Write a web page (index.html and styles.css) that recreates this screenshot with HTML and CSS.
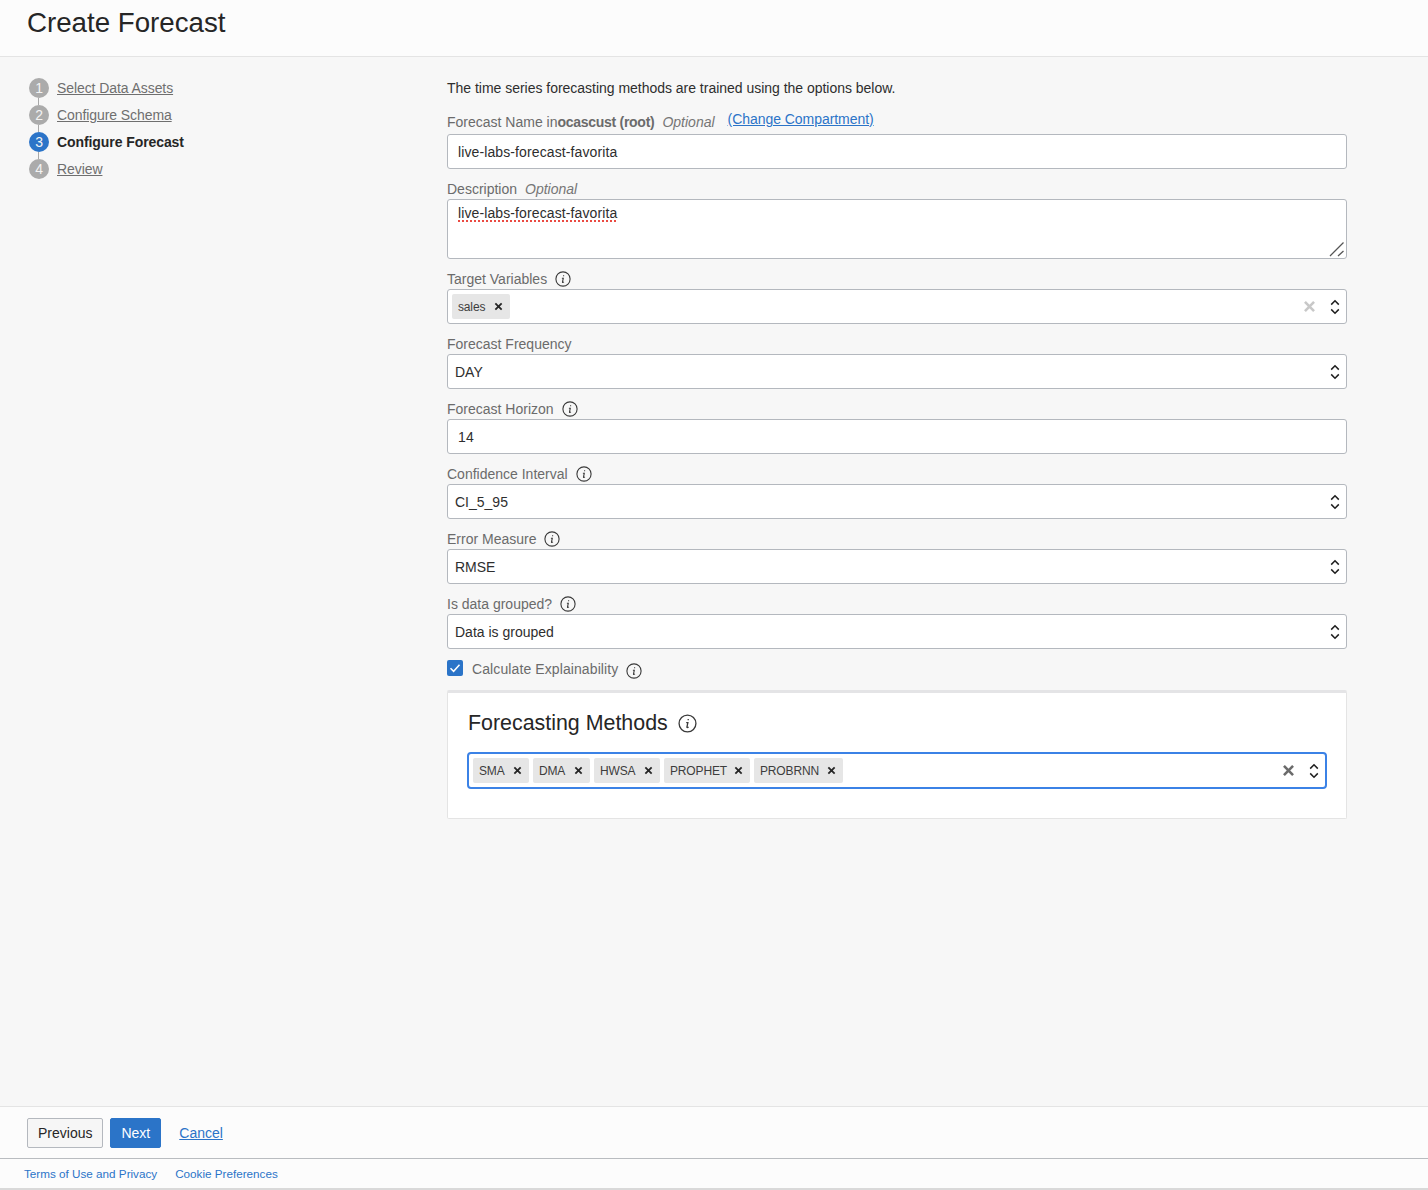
FILE: index.html
```html
<!DOCTYPE html>
<html lang="en">
<head>
<meta charset="utf-8">
<title>Create Forecast</title>
<link rel="stylesheet" href="styles.css">
</head>
<body>
<svg class="defs" width="0" height="0" aria-hidden="true">
  <symbol id="info" viewBox="0 0 16 16">
    <circle cx="8" cy="8" r="7.1" fill="none" stroke="currentColor" stroke-width="1.1"/>
    <path d="M8.6 4.2v1.1M6.9 7.2h1.4L7.5 11c-.1.5.5.6 1.4-.1" fill="none" stroke="currentColor" stroke-width="1.1"/>
  </symbol>
  <symbol id="updown" viewBox="0 0 10 16">
    <path d="M1.2 5.6 5 1.8l3.8 3.8M1.2 10.4 5 14.2l3.8-3.8" fill="none" stroke="currentColor" stroke-width="1.5"/>
  </symbol>
  <symbol id="close" viewBox="0 0 10 10">
    <path d="M1.5 1.5l7 7M8.5 1.5l-7 7" fill="none" stroke="currentColor" stroke-width="2"/>
  </symbol>
</svg>
<div class="page">
  <header class="header"><h1 class="title">Create Forecast</h1></header>
  <main class="main">
    <nav class="steps">
      <div class="step"><span class="num">1</span><a class="step-link" href="#">Select Data Assets</a></div>
      <div class="step"><span class="num">2</span><a class="step-link" href="#">Configure Schema</a></div>
      <div class="step current"><span class="num">3</span><span class="step-now">Configure Forecast</span></div>
      <div class="step"><span class="num">4</span><a class="step-link" href="#">Review</a></div>
    </nav>
    <form class="form">
      <p class="intro">The time series forecasting methods are trained using the options below.</p>
      <div class="field">
        <div class="label name-label"><span>Forecast Name in<b class="strong">ocascust (root)</b></span><i class="opt">Optional</i><a class="compartment" href="#">(Change Compartment)</a></div>
        <div class="control text">live-labs-forecast-favorita</div>
      </div>
      <div class="field">
        <div class="label"><span>Description</span><i class="opt">Optional</i></div>
        <div class="control area"><span class="squiggle">live-labs-forecast-favorita</span>
          <svg class="grip" width="16" height="16" viewBox="0 0 16 16"><path d="M1 15 14.500 1.500M9 15l5.500-5" fill="none" stroke="#555" stroke-width="1.300"/></svg>
        </div>
      </div>
      <div class="field">
        <div class="label"><span>Target Variables</span><svg class="info"><use href="#info"/></svg></div>
        <div class="control multi">
          <span class="chip small">sales<svg class="chip-x"><use href="#close"/></svg></span>
          <svg class="clear faint"><use href="#close"/></svg>
          <svg class="updown"><use href="#updown"/></svg>
        </div>
      </div>
      <div class="field">
        <div class="label"><span>Forecast Frequency</span></div>
        <div class="control select">DAY<svg class="updown"><use href="#updown"/></svg></div>
      </div>
      <div class="field">
        <div class="label"><span>Forecast Horizon</span><svg class="info"><use href="#info"/></svg></div>
        <div class="control text">14</div>
      </div>
      <div class="field">
        <div class="label"><span>Confidence Interval</span><svg class="info"><use href="#info"/></svg></div>
        <div class="control select">CI_5_95<svg class="updown"><use href="#updown"/></svg></div>
      </div>
      <div class="field">
        <div class="label"><span>Error Measure</span><svg class="info"><use href="#info"/></svg></div>
        <div class="control select">RMSE<svg class="updown"><use href="#updown"/></svg></div>
      </div>
      <div class="field">
        <div class="label"><span>Is data grouped?</span><svg class="info"><use href="#info"/></svg></div>
        <div class="control select">Data is grouped<svg class="updown"><use href="#updown"/></svg></div>
      </div>
      <div class="check-row">
        <span class="checkbox"><svg width="16" height="16" viewBox="0 0 16 16"><path d="M3.500 8.300 6.600 11.300 12.500 4.800" fill="none" stroke="#fff" stroke-width="1.500"/></svg></span>
        <span class="check-label">Calculate Explainability</span>
        <svg class="info check-info"><use href="#info"/></svg>
      </div>
      <section class="panel">
        <h2 class="panel-title">Forecasting Methods<svg class="info panel-info"><use href="#info"/></svg></h2>
        <div class="control multi focused">
          <span class="chip">SMA<svg class="chip-x"><use href="#close"/></svg></span>
          <span class="chip">DMA<svg class="chip-x"><use href="#close"/></svg></span>
          <span class="chip">HWSA<svg class="chip-x"><use href="#close"/></svg></span>
          <span class="chip">PROPHET<svg class="chip-x"><use href="#close"/></svg></span>
          <span class="chip">PROBRNN<svg class="chip-x"><use href="#close"/></svg></span>
          <svg class="clear"><use href="#close"/></svg>
          <svg class="updown"><use href="#updown"/></svg>
        </div>
      </section>
    </form>
  </main>
  <div class="actions">
    <button class="btn" type="button">Previous</button>
    <button class="btn primary" type="button">Next</button>
    <a class="cancel" href="#">Cancel</a>
  </div>
  <footer class="footer">
    <a class="foot-link" href="#">Terms of Use and Privacy</a>
    <a class="foot-link" href="#">Cookie Preferences</a>
  </footer>
</div>
</body>
</html>
```
FILE: styles.css
```css
* { box-sizing: border-box; }
html, body { margin: 0; height: 100%; }
body {
  font-family: "Liberation Sans", Arial, sans-serif;
  font-size: 14px;
  color: #262626;
  background: #f7f7f7;
  overflow: hidden;
}
.defs { position: absolute; }
.page { display: flex; flex-direction: column; height: 1190px; }

.header {
  height: 57px;
  flex: none;
  background: #fcfcfc;
  border-bottom: 1px solid #e4e4e4;
  padding-left: 27px;
}
.title {
  margin: 0;
  font-size: 27.7px;
  font-weight: 400;
  line-height: 45px;
}

.main { flex: 1; display: flex; padding: 21px 0 0 29px; }

.steps { width: 418px; flex: none; letter-spacing: -0.08px; }
.step {
  position: relative;
  display: flex;
  align-items: center;
  gap: 8px;
  height: 20px;
  margin-bottom: 7px;
}
.step:not(:last-child)::after {
  content: "";
  position: absolute;
  left: 9px;
  top: 20px;
  width: 1px;
  height: 7px;
  background: #a8a8a8;
}
.num {
  width: 20px;
  height: 20px;
  border-radius: 50%;
  background: #ababab;
  color: #f3f3f3;
  font-size: 14px;
  line-height: 20px;
  text-align: center;
}
.current .num { background: #2b74c8; }
.step-link { color: #6f6f6f; }
.step-now { color: #262626; font-weight: 700; }

.form { width: 900px; flex: none; }
.intro { margin: 0; height: 20px; line-height: 20px; color: #2e2e2e; letter-spacing: -0.02px; }

.field { margin-top: 10px; }
.label {
  display: flex;
  align-items: center;
  height: 20px;
  color: #6b6b6b;
  line-height: 20px;
}
.name-label { height: 26px; align-items: flex-end; padding-bottom: 2px; }
.strong { font-weight: 700; letter-spacing: -0.28px; }
.opt { margin-left: 8px; color: #767676; }
.compartment { margin: 0 0 3px 13px; color: #2b74c8; letter-spacing: -0.05px; }
.info { width: 16px; height: 16px; margin-left: 8px; color: #3a3a3a; flex: none; }

.control {
  position: relative;
  display: flex;
  align-items: center;
  height: 35px;
  background: #fff;
  border: 1px solid #b4b8be;
  border-radius: 3px;
  color: #2e2e2e;
}
.text { padding-left: 10px; letter-spacing: 0.11px; }
.select { padding-left: 7px; }
.area { height: 60px; align-items: flex-start; padding: 3px 10px; line-height: 20px; letter-spacing: 0.11px; }
.squiggle {
  text-decoration: underline dotted #ea4a42 2px;
  text-underline-offset: 2px;
  text-decoration-skip-ink: none;
}
.grip { position: absolute; right: 1px; bottom: 1px; }
.multi { gap: 4px; padding-left: 4px; }
.chip {
  display: inline-flex;
  align-items: center;
  justify-content: space-between;
  height: 25px;
  padding: 0 7px 0 6px;
  background: #e6e6e6;
  border-radius: 2px;
  font-size: 12px;
  color: #3d3d3d;
  letter-spacing: -0.15px;
}
.chip.small { width: 58px; }
.chip-x { width: 9px; height: 9px; color: #262626; flex: none; }
.clear { width: 13px; height: 13px; margin-left: auto; margin-right: 30px; color: #6b6b6b; }
.clear.faint { color: #c8c8c8; }
.updown { position: absolute; right: 6px; top: 50%; width: 10px; height: 16px; margin-top: -8px; color: #1f1f1f; }

.check-row { display: flex; align-items: center; height: 20px; margin-top: 10px; }
.checkbox {
  width: 16px;
  height: 16px;
  flex: none;
  background: #2b74c8;
  border-radius: 2px;
  display: flex;
  margin-top: -2px;
}
.check-label { margin-left: 9px; color: #6b6b6b; letter-spacing: 0.1px; }
.check-info { margin-top: 4px; }

.panel {
  height: 129px;
  margin-top: 11px;
  padding: 17px 20px 0;
  background: #fff;
  border: 1px solid #e4e4e4;
  border-top: 3px solid #e4e4e6;
  border-radius: 2px;
}
.panel-title {
  display: flex;
  align-items: center;
  height: 26px;
  margin: 0 0 16px;
  font-size: 21.4px;
  font-weight: 400;
  color: #262626;
}
.panel-info { width: 19px; height: 19px; margin-left: 10px; }
.focused { height: 37px; margin: 0 -1px; border: 2px solid #3b82e6; border-radius: 4px; }
.focused .chip:nth-of-type(1) { width: 56px; }
.focused .chip:nth-of-type(2) { width: 57px; }
.focused .chip:nth-of-type(3) { width: 66px; }
.focused .chip:nth-of-type(4) { width: 86px; }
.focused .chip:nth-of-type(5) { width: 89px; }
.focused .clear { margin-right: 30px; }

.actions {
  flex: none;
  display: flex;
  align-items: center;
  height: 53px;
  padding: 1px 27px 0;
  background: #fcfcfc;
  border-top: 1px solid #e4e4e4;
  border-bottom: 1px solid #b9bcc0;
}
.btn {
  height: 30px;
  padding: 0 10px;
  border: 1px solid #b4b8be;
  border-radius: 2px;
  background: #f6f6f6;
  color: #262626;
  font: 14px "Liberation Sans", Arial, sans-serif;
}
.primary {
  margin-left: 7px;
  background: #2b74c8;
  border-color: #2b74c8;
  color: #fff;
}
.cancel { margin-left: 18px; color: #2b74c8; }

.footer {
  flex: none;
  display: flex;
  align-items: center;
  gap: 18px;
  height: 31px;
  padding: 0 0 0 24px;
  background: #fcfcfc;
  border-bottom: 2px solid #d9d9d9;
  font-size: 11.7px;
}
.foot-link { color: #2b74c8; text-decoration: none; }
```
